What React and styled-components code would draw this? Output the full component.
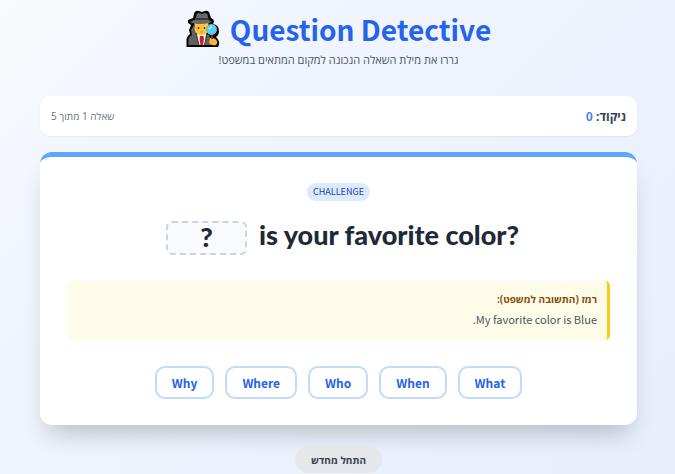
import React, { useState } from 'react';
import styled, { createGlobalStyle } from 'styled-components';

const GlobalStyle = createGlobalStyle`
  * {
    box-sizing: border-box;
  }
  body {
    margin: 0;
    min-height: 100vh;
    background: linear-gradient(135deg, #f8fafc 0%, #f1f5fe 25%, #e7eefc 100%);
    font-family: 'Noto Sans CJK SC', 'Open Sans', sans-serif;
    color: #1f2937;
  }
  button {
    font-family: inherit;
    cursor: pointer;
  }
`;

const hebrewFont = "'Open Sans', 'Noto Sans CJK SC', sans-serif";

const Page = styled.main`
  display: flex;
  flex-direction: column;
  gap: 16px;
  min-height: 100vh;
  padding: 8px 38px 0 40px;
`;

const Header = styled.header`
  display: flex;
  flex-direction: column;
  align-items: center;
  gap: 2px;
  margin-bottom: 12px;
`;

const Title = styled.h1`
  display: flex;
  align-items: center;
  gap: 10px;
  margin: 0;
  font-size: 28px;
  line-height: 42px;
  font-weight: 700;
  color: #2563eb;
`;

const Subtitle = styled.p`
  margin: 0;
  font-family: ${hebrewFont};
  font-size: 11px;
  line-height: 16px;
  color: #4b5563;
`;

const ScoreBar = styled.section`
  display: flex;
  justify-content: space-between;
  align-items: center;
  height: 40px;
  padding: 0 11px;
  border-radius: 10px;
  background: #ffffff;
  box-shadow: 0 1px 2px rgba(0, 0, 0, 0.05);
  font-family: ${hebrewFont};
`;

const Score = styled.div`
  font-size: 12px;
  line-height: 20px;
  font-weight: 700;
  color: #374151;
`;

const ScoreValue = styled.span`
  font-family: 'Noto Sans CJK SC', sans-serif;
  color: #3b82f6;
`;

const Progress = styled.div`
  font-size: 10px;
  line-height: 16px;
  color: #6b7280;
`;

const Card = styled.section`
  display: flex;
  flex-direction: column;
  align-items: center;
  padding: 26px 27px;
  border-top: 5px solid #60a5fa;
  border-radius: 12px;
  background: #ffffff;
  box-shadow: 0 16px 24px -8px rgba(0, 0, 0, 0.22);
`;

const Badge = styled.span`
  padding: 0 6px;
  border-radius: 9px;
  background: #dbeafe;
  font-size: 9px;
  line-height: 18px;
  color: #1e40af;
`;

const Question = styled.div`
  display: flex;
  align-items: flex-start;
  gap: 12px;
  margin-top: 20px;
  padding-left: 8px;
  font-family: Lato, sans-serif;
  font-size: 27px;
  line-height: 28px;
  font-weight: 900;
`;

const DropZone = styled.div`
  width: 81px;
  height: 34px;
  border: 2px dashed #cbd5e1;
  border-radius: 6px;
  background: #f8fafc;
  text-align: center;
`;

const Hint = styled.div`
  align-self: stretch;
  margin-top: 26px;
  padding: 8px 10px 10px;
  border-right: 3px solid #facc15;
  border-radius: 5px;
  background: #fefce8;
`;

const HintTitle = styled.p`
  margin: 0;
  font-family: ${hebrewFont};
  font-size: 10px;
  line-height: 20px;
  font-weight: 700;
  color: #854d0e;
`;

const HintText = styled.p`
  margin: 0;
  font-size: 11px;
  line-height: 21px;
  color: #4b5563;
`;

const Options = styled.div`
  display: flex;
  flex-wrap: wrap;
  justify-content: center;
  gap: 11px;
  margin-top: 26px;
`;

const Option = styled.button`
  height: 33px;
  padding: 0 15px;
  border: 2px solid #bfdbfe;
  border-radius: 10px;
  background: #ffffff;
  font-size: 12px;
  line-height: 28px;
  font-weight: 700;
  color: #2563eb;
`;

const RestartButton = styled.button`
  align-self: center;
  height: 27px;
  margin-top: 5px;
  padding: 0 16px;
  border: none;
  border-radius: 14px;
  background: #e5e7eb;
  && {
    font-family: ${hebrewFont};
  }
  font-size: 10px;
  font-weight: 700;
  color: #374151;
`;

const words = ['What', 'When', 'Who', 'Where', 'Why'];

function DetectiveIcon() {
  return (
    <svg width="34" height="38" viewBox="0 0 34 38" aria-hidden="true">
      <path
        d="M8 4 Q9 0 13 1 L16 2 L19 1 Q23 0 24 5 L25 8 Q28 9 28 12 L27 14 Q33 15 33 21 Q33 25 30 27 Q34 31 33 35 L32 37 H0.5 V29 Q1 26 4 24 L3 20 L5 15 L2 13 V10 L7 8 Z"
        fill="#050505"
      />
      <path d="M2.5 35 V29 Q3 27 6 25 L5 20 L8 15 L10 24 L16 27 L22 24 Q25 27 25 35 Z" fill="#606060" />
      <path d="M11 24 H20 L18.5 35 H13 Z" fill="#ffffff" />
      <path d="M10 24 L13 35 M21 24 L18.5 35" stroke="#3b3b3b" strokeWidth="1" />
      <path d="M14 26 H17.5 L18 29 L17 35 H14.5 L13.5 29 Z" fill="#d71920" />
      <path d="M8.5 12 H22.5 V19 Q22 25 15.5 25 Q9 25 8.5 19 Z" fill="#ffc23a" />
      <path d="M10 8 Q10 3 13 3 L16 4 L19 3 Q22 3 22 8 Z" fill="#696969" />
      <path d="M9 8 H23 V10 H9 Z" fill="#383838" />
      <path d="M4 12 L8 10 H23 L26 12 Q21 14 15 14 Q8 14 4 12 Z" fill="#696969" />
      <circle cx="12.5" cy="18" r="0.9" fill="#5a3d18" />
      <circle cx="18.5" cy="18" r="0.9" fill="#5a3d18" />
      <path d="M14 22 H17" stroke="#c98a20" />
      <path d="M24 28 L23 33 Q25 36 30 35 Q32 33 31 31 Q29 28 27 28 Z" fill="#f6b52c" />
      <path d="M26 24 V29" stroke="#573b1d" strokeWidth="2" />
      <circle cx="25.5" cy="19.5" r="5" fill="#4fd5f7" stroke="#8bb3c0" />
      <path d="M23 19 L26 16.5" stroke="#c5f6ff" strokeWidth="1.5" />
    </svg>
  );
}

function App() {
  const [answer, setAnswer] = useState('?');

  const handleDrop = (e) => {
    e.preventDefault();
    setAnswer(e.dataTransfer.getData('text/plain'));
  };

  return (
    <>
      <GlobalStyle />
      <Page dir="rtl" lang="he">
        <Header>
          <Title dir="ltr">
            <DetectiveIcon />
            Question Detective
          </Title>
          <Subtitle>גררו את מילת השאלה הנכונה למקום המתאים במשפט!</Subtitle>
        </Header>

        <ScoreBar>
          <Score>
            ניקוד: <ScoreValue>0</ScoreValue>
          </Score>
          <Progress>שאלה 1 מתוך 5</Progress>
        </ScoreBar>

        <Card>
          <Badge>CHALLENGE</Badge>
          <Question dir="ltr">
            <DropZone onDragOver={(e) => e.preventDefault()} onDrop={handleDrop}>
              {answer}
            </DropZone>
            <span>is your favorite color?</span>
          </Question>
          <Hint>
            <HintTitle>רמז (התשובה למשפט):</HintTitle>
            <HintText>My favorite color is Blue.</HintText>
          </Hint>
          <Options>
            {words.map((word) => (
              <Option
                key={word}
                type="button"
                draggable
                onDragStart={(e) => e.dataTransfer.setData('text/plain', word)}
                onClick={() => setAnswer(word)}
              >
                {word}
              </Option>
            ))}
          </Options>
        </Card>

        <RestartButton type="button" onClick={() => setAnswer('?')}>
          התחל מחדש
        </RestartButton>
      </Page>
    </>
  );
}

export default App;
